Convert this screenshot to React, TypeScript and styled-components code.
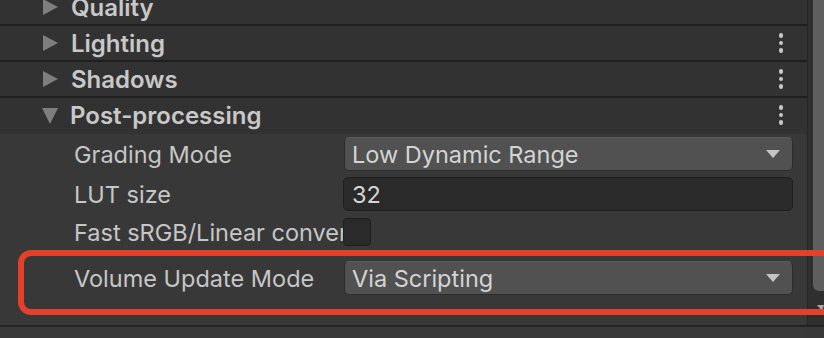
import styled, { createGlobalStyle } from 'styled-components';

const GlobalStyle = createGlobalStyle`
	html, body {
		margin: 0;
		padding: 0;
		background: #383838;
		overflow: hidden;
	}
	body {
		font-family: Inter, "Noto Sans", "Liberation Sans", sans-serif;
	}
`;

const Window = styled.div`
	position: relative;
	width: 824px;
	height: 338px;
	display: flex;
	overflow: hidden;
	background: #383838;
`;

const Inspector = styled.div`
	flex: 1;
	display: flex;
	flex-direction: column;
	margin-top: -10px;
`;

const HeaderRow = styled.div<{ $last?: boolean }>`
	height: 34px;
	flex: none;
	display: flex;
	align-items: center;
	padding: 0 24px 0 42px;
	background: #323232;
	border-bottom: 2px solid ${(p) => (p.$last ? '#323232' : '#1f1f1f')};
	color: #c8c8c8;
	font-size: 24px;
	font-weight: 600;
`;

const Arrow = styled.span<{ $open?: boolean }>`
	width: 0;
	height: 0;
	margin-right: 12px;
	${(p) =>
		p.$open
			? `border-left: 8px solid transparent;
			   border-right: 8px solid transparent;
			   border-top: 16px solid #7e7e7e;
			   margin-top: 2px;`
			: `border-top: 8px solid transparent;
			   border-bottom: 8px solid transparent;
			   border-left: 15px solid #7e7e7e;
			   margin-left: 1px;
			   margin-right: 13px;`}
`;

const HeaderTitle = styled.span`
	flex: 1;
`;

const Kebab = styled.span`
	display: flex;
	flex-direction: column;
	gap: 3px;
	& > i {
		width: 4.5px;
		height: 4.5px;
		border-radius: 50%;
		background: #c8c8c8;
	}
`;

const Body = styled.div`
	flex: none;
	height: 193px;
	box-sizing: border-box;
	display: flex;
	flex-direction: column;
	gap: 6px;
	padding: 3px 14px 0 74px;
	border-bottom: 2px solid #232323;
`;

const Footer = styled.div`
	flex: 1;
	background: #393939;
`;

const PropRow = styled.div<{ $h?: number; $top?: number }>`
	height: ${(p) => p.$h ?? 34}px;
	margin-top: ${(p) => p.$top ?? 0}px;
	display: grid;
	grid-template-columns: 269px 1fr;
	align-items: center;
`;

const Label = styled.div`
	color: #c6c6c6;
	font-size: 23.5px;
	white-space: nowrap;
	overflow: hidden;
`;

const Dropdown = styled.div`
	height: 32px;
	margin-left: 1px;
	display: flex;
	align-items: center;
	justify-content: space-between;
	padding: 0 12px 0 7px;
	background: #515151;
	border: 1px solid #2c2c2c;
	border-top-color: #5a5a5a;
	border-radius: 5px;
	color: #d4d4d4;
	font-size: 23.5px;
`;

const DropArrow = styled.span`
	width: 0;
	height: 0;
	border-left: 7px solid transparent;
	border-right: 7px solid transparent;
	border-top: 8px solid #c4c4c4;
`;

const TextField = styled.div`
	height: 32px;
	display: flex;
	align-items: center;
	padding: 0 8px;
	background: #2a2a2a;
	border: 1px solid #1e1e1e;
	border-radius: 5px;
	color: #d4d4d4;
	font-size: 23.5px;
`;

const Checkbox = styled.div`
	width: 26px;
	height: 26px;
	background: #2a2a2a;
	border: 1px solid #1f1f1f;
	border-radius: 4px;
`;

const ScrollTrack = styled.div`
	width: 16px;
	display: flex;
	flex-direction: column;
	align-items: flex-end;
	background: #2f2f2f;
	border-left: 1px solid #262626;
	border-bottom: 2px solid #232323;
	margin-bottom: 11px;
`;

const ScrollThumb = styled.div`
	width: 11px;
	height: 291px;
	background: #5e5e5e;
	border-radius: 0 0 0 6px;
`;

const ScrollDown = styled.span`
	margin-top: 14px;
	width: 0;
	height: 0;
	border-left: 5px solid transparent;
	border-right: 2px solid transparent;
	border-top: 6px solid #a8a8a8;
`;

const Highlight = styled.div`
	position: absolute;
	left: 18px;
	top: 250px;
	width: 830px;
	height: 65px;
	box-sizing: border-box;
	border: 6px solid #e4402a;
	border-radius: 13px;
	pointer-events: none;
`;

const headers = ['Quality', 'Lighting', 'Shadows'];

const Dots = () => (
	<Kebab>
		<i />
		<i />
		<i />
	</Kebab>
);

export default function App() {
	return (
		<>
			<GlobalStyle />
			<Window>
				<Inspector>
					{headers.map((h) => (
						<HeaderRow key={h}>
							<Arrow />
							<HeaderTitle>{h}</HeaderTitle>
							{h !== 'Quality' && <Dots />}
						</HeaderRow>
					))}
					<HeaderRow $last>
						<Arrow $open />
						<HeaderTitle>Post-processing</HeaderTitle>
						<Dots />
					</HeaderRow>
					<Body>
						<PropRow>
							<Label>Grading Mode</Label>
							<Dropdown>
								<span>Low Dynamic Range</span>
								<DropArrow />
							</Dropdown>
						</PropRow>
						<PropRow>
							<Label>LUT size</Label>
							<TextField>32</TextField>
						</PropRow>
						<PropRow $h={30}>
							<Label>Fast sRGB/Linear conversion</Label>
							<Checkbox />
						</PropRow>
						<PropRow $top={8}>
							<Label>Volume Update Mode</Label>
							<Dropdown>
								<span>Via Scripting</span>
								<DropArrow />
							</Dropdown>
						</PropRow>
					</Body>
					<Footer />
				</Inspector>
				<ScrollTrack>
					<ScrollThumb />
					<ScrollDown />
				</ScrollTrack>
				<Highlight />
			</Window>
		</>
	);
}
